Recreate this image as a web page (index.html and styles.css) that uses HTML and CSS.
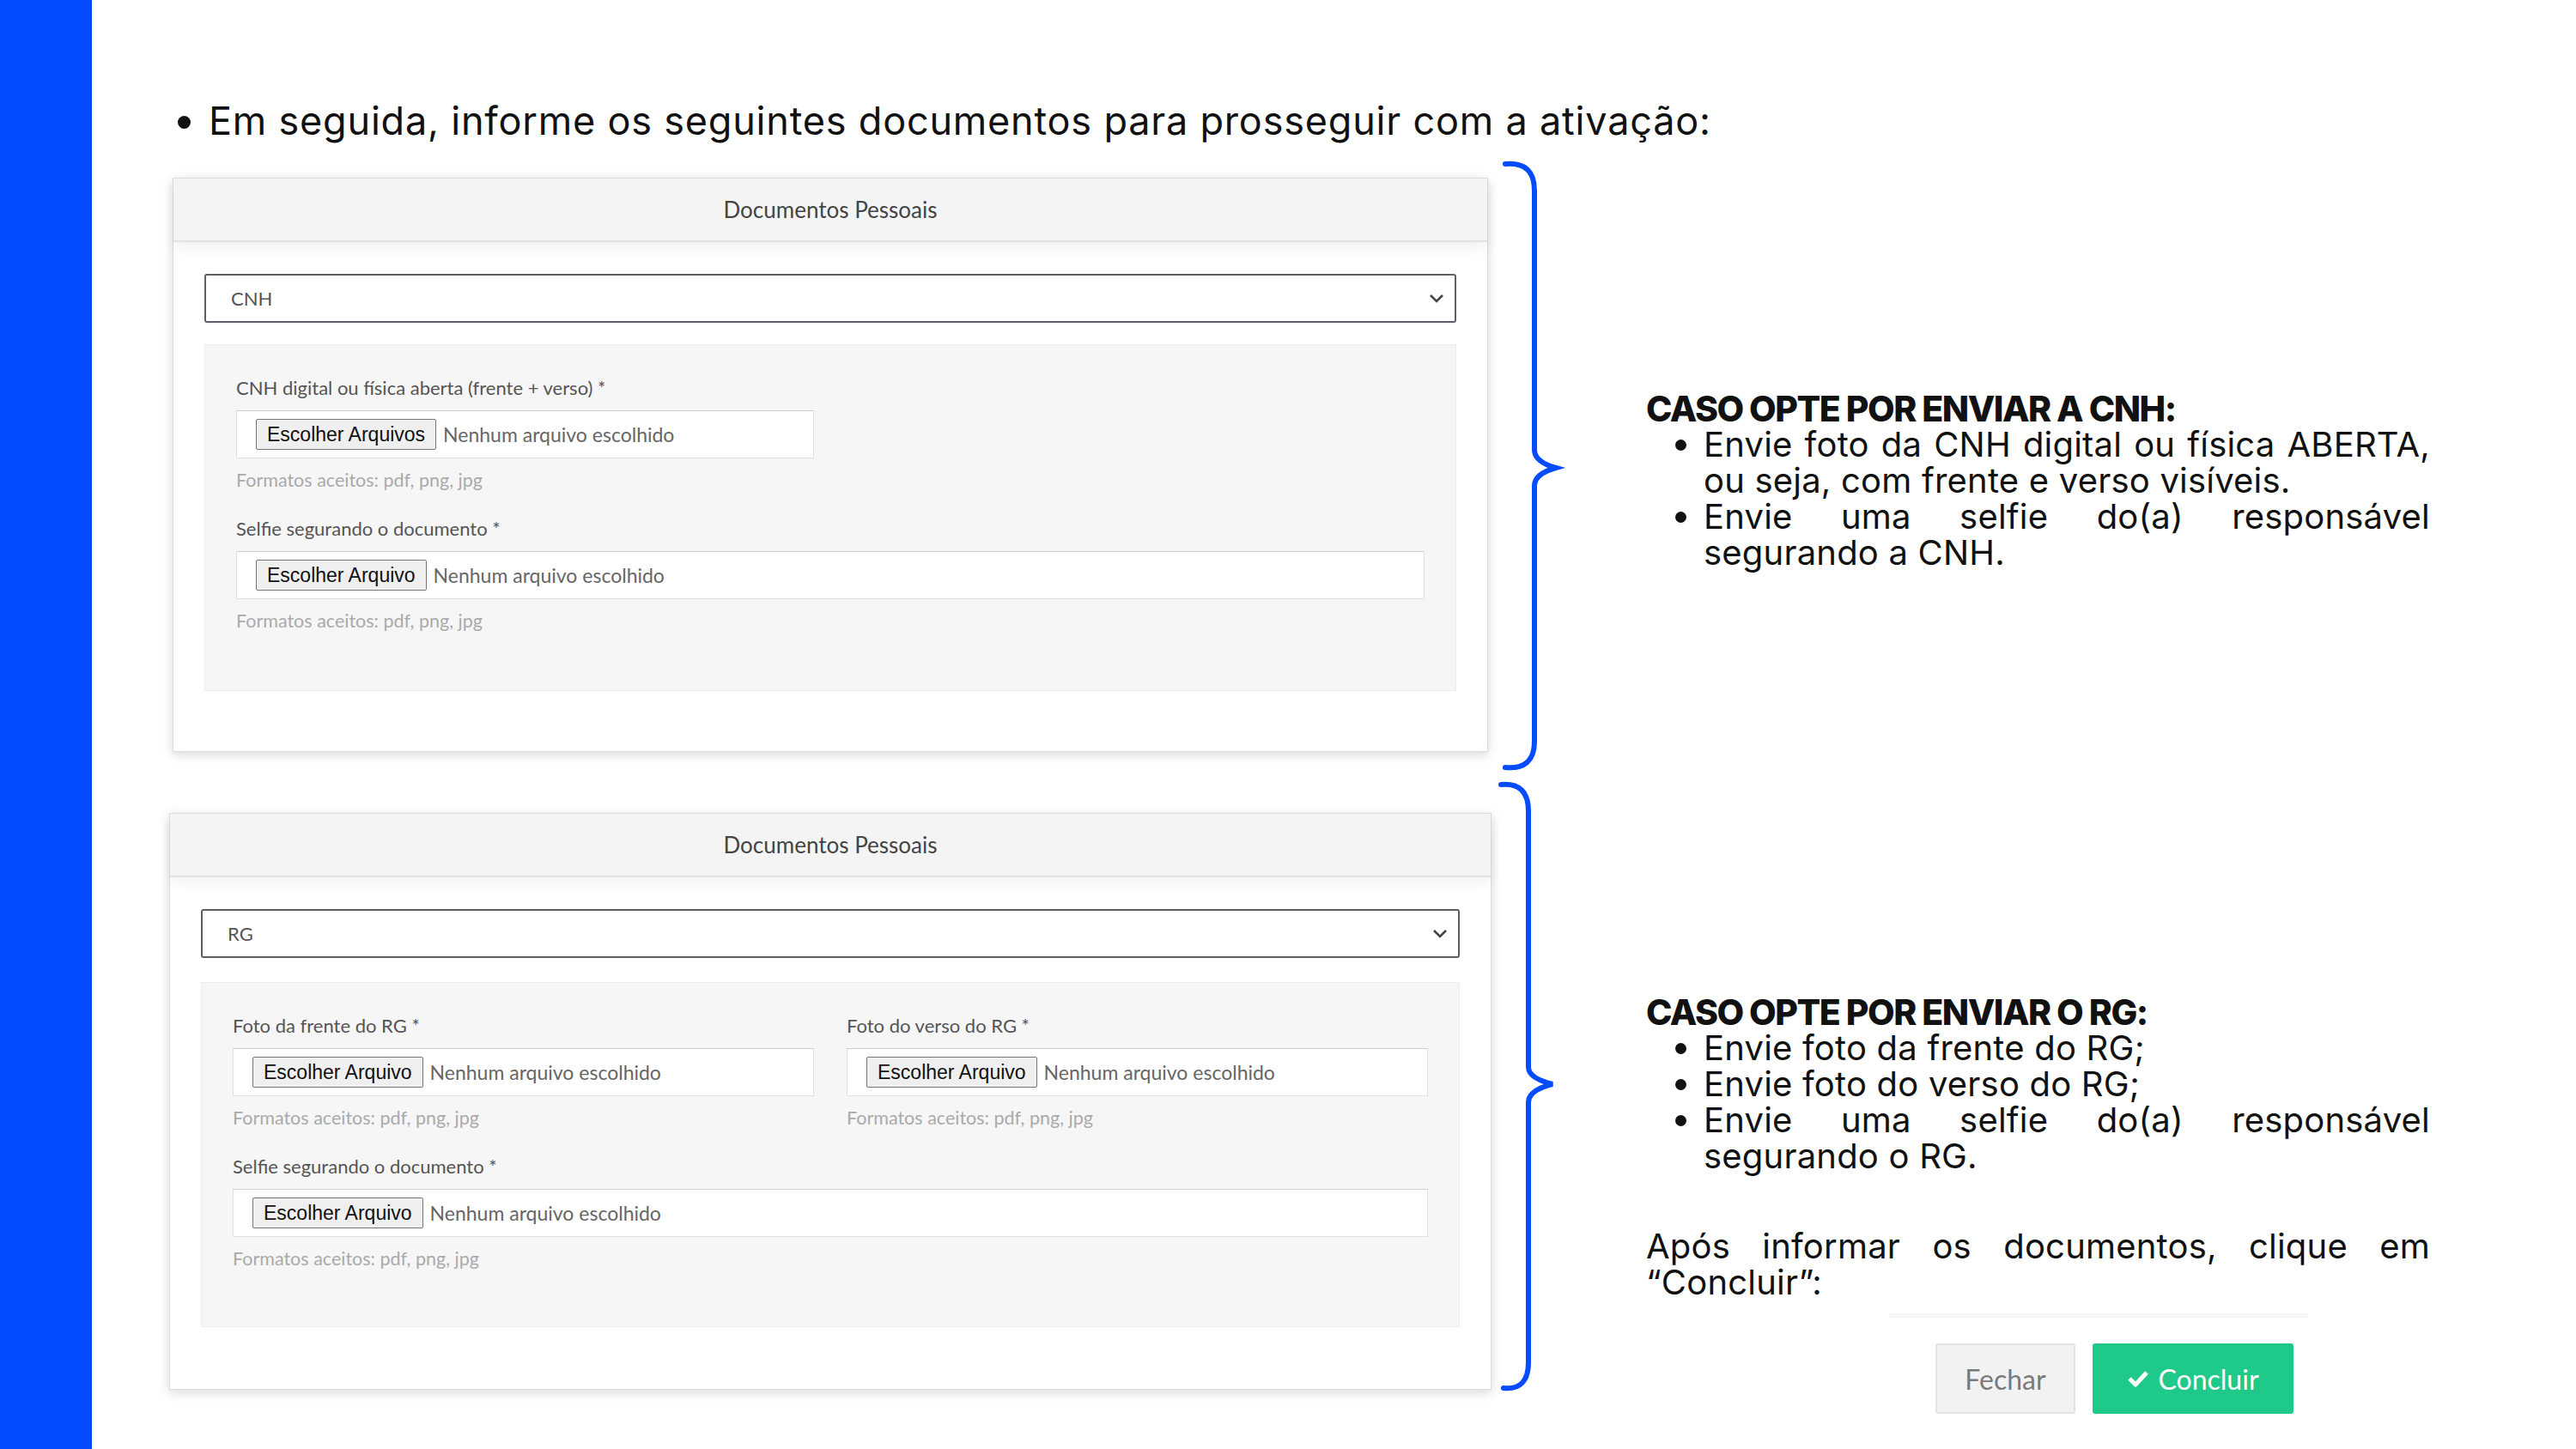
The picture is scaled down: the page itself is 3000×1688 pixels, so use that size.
FILE: index.html
```html
<!DOCTYPE html>
<html lang="pt-BR">
<head>
    <meta charset="UTF-8">
    <title>Ativação - Documentos</title>
    <link rel="stylesheet" href="styles.css">
</head>
<body>
    <div class="slide">
        <aside class="side-bar"></aside>
        <main class="content">
            <ul class="lead">
                <li>Em seguida, informe os seguintes documentos para prosseguir com a ativação:</li>
            </ul>

            <section class="step step-cnh">
                <div class="card card-cnh">
                    <div class="card-head">Documentos Pessoais</div>
                    <div class="card-body">
                        <div class="select">
                            <span>CNH</span>
                            <svg class="chevron" width="18" height="12" viewBox="0 0 18 12"><polyline points="2,2 9,9 16,2" fill="none" stroke="#444" stroke-width="2.6"/></svg>
                        </div>
                        <div class="panel">
                            <div class="fields">
                                <div class="field">
                                    <div class="label">CNH digital ou física aberta (frente + verso) *</div>
                                    <div class="file-box"><span class="file-btn">Escolher Arquivos</span><span class="file-name">Nenhum arquivo escolhido</span></div>
                                    <div class="hint">Formatos aceitos: pdf, png, jpg</div>
                                </div>
                                <div class="field field-wide">
                                    <div class="label">Selfie segurando o documento *</div>
                                    <div class="file-box"><span class="file-btn">Escolher Arquivo</span><span class="file-name">Nenhum arquivo escolhido</span></div>
                                    <div class="hint">Formatos aceitos: pdf, png, jpg</div>
                                </div>
                            </div>
                        </div>
                    </div>
                </div>
                <svg class="brace" width="80" height="713" viewBox="0 0 80 713">
                    <path d="M8 5 Q42 2 42 36 L42 338 Q42 352 67 359 Q42 366 42 380 L42 678 Q42 711 8 708" fill="none" stroke="#054bff" stroke-width="6" stroke-linecap="round"/>
                </svg>
                <div class="notes notes-cnh">
                    <h2>CASO OPTE POR ENVIAR A CNH:</h2>
                    <ul>
                        <li><span class="jline">Envie foto da CNH digital ou física ABERTA,</span> ou seja, com frente e verso visíveis.</li>
                        <li><span class="jline">Envie uma selfie do(a) responsável</span> segurando a CNH.</li>
                    </ul>
                </div>
            </section>

            <section class="step step-rg">
                <div class="card card-rg">
                    <div class="card-head">Documentos Pessoais</div>
                    <div class="card-body">
                        <div class="select">
                            <span>RG</span>
                            <svg class="chevron" width="18" height="12" viewBox="0 0 18 12"><polyline points="2,2 9,9 16,2" fill="none" stroke="#444" stroke-width="2.6"/></svg>
                        </div>
                        <div class="panel">
                            <div class="fields">
                                <div class="field">
                                    <div class="label">Foto da frente do RG *</div>
                                    <div class="file-box"><span class="file-btn">Escolher Arquivo</span><span class="file-name">Nenhum arquivo escolhido</span></div>
                                    <div class="hint">Formatos aceitos: pdf, png, jpg</div>
                                </div>
                                <div class="field">
                                    <div class="label">Foto do verso do RG *</div>
                                    <div class="file-box"><span class="file-btn">Escolher Arquivo</span><span class="file-name">Nenhum arquivo escolhido</span></div>
                                    <div class="hint">Formatos aceitos: pdf, png, jpg</div>
                                </div>
                                <div class="field field-wide">
                                    <div class="label">Selfie segurando o documento *</div>
                                    <div class="file-box"><span class="file-btn">Escolher Arquivo</span><span class="file-name">Nenhum arquivo escolhido</span></div>
                                    <div class="hint">Formatos aceitos: pdf, png, jpg</div>
                                </div>
                            </div>
                        </div>
                    </div>
                </div>
                <svg class="brace" width="80" height="713" viewBox="0 0 80 713">
                    <path d="M3 5 Q35 2 35 36 L35 334 Q35 347 63 354 Q35 361 35 375 L35 678 Q35 711 6 708" fill="none" stroke="#054bff" stroke-width="6" stroke-linecap="round"/>
                </svg>
                <div class="notes notes-rg">
                    <h2>CASO OPTE POR ENVIAR O RG:</h2>
                    <ul>
                        <li>Envie foto da frente do RG;</li>
                        <li>Envie foto do verso do RG;</li>
                        <li><span class="jline">Envie uma selfie do(a) responsável</span> segurando o RG.</li>
                    </ul>
                    <p class="after"><span class="jline">Após informar os documentos, clique em</span> “Concluir”:</p>
                    <div class="action-line"></div>
                    <div class="actions">
                        <span class="btn btn-close">Fechar</span>
                        <span class="btn btn-done">
                            <svg width="26" height="22" viewBox="0 0 26 22"><polyline points="3,11 10,18 23,4" fill="none" stroke="#fff" stroke-width="5" stroke-linejoin="round"/></svg>
                            Concluir
                        </span>
                    </div>
                </div>
            </section>
        </main>
    </div>
</body>
</html>
```

FILE: styles.css
```css
* { box-sizing: border-box; }
html, body { margin: 0; }
body {
    width: 3000px;
    height: 1688px;
    overflow: hidden;
    background: #fff;
    font-family: "Inter", "Liberation Sans", sans-serif;
    color: #111;
}
.slide { display: flex; height: 1688px; }
.side-bar { width: 107px; flex: none; background: #054bff; }
.content { flex: 1; padding-left: 90px; }

.lead {
    margin: 113px 0 0;
    padding-left: 46px;
    font-size: 45px;
    line-height: 56px;
    letter-spacing: 0.8px;
}

.step {
    display: grid;
    grid-template-columns: 1548px 172px 913px;
    height: 713px;
}
.step-cnh { margin-top: 17px; }
.step-rg { margin-top: 10px; }
.brace { display: block; }

/* cards */
.card {
    align-self: start;
    background: #fff;
    border: 1px solid #dcdcdc;
    box-shadow: 0 3px 12px rgba(0, 0, 0, 0.16);
    font-family: "Lato", "Liberation Sans", sans-serif;
}
.card-cnh { margin: 21px 0 0 4px; width: 1532px; height: 669px; }
.card-rg { margin-top: 38px; width: 1540px; height: 672px; }
.card-head {
    height: 74px;
    display: flex;
    align-items: center;
    justify-content: center;
    background: #f4f4f4;
    border-bottom: 2px solid #e2e2e2;
    box-shadow: 0 8px 14px rgba(0, 0, 0, 0.05);
    font-size: 26px;
    color: #444;
}
.card-body { padding: 37px 36px 0; }
.select {
    height: 57px;
    display: flex;
    align-items: center;
    justify-content: space-between;
    padding: 0 12px 0 29px;
    border: 2px solid #5b6066;
    border-radius: 3px;
    font-size: 22px;
    color: #555;
}
.panel {
    margin-top: 25px;
    height: 404px;
    padding: 38px 36px 0;
    background: #f6f6f6;
    border: 1px solid #ececec;
}
.card-rg .panel { margin-top: 28px; height: 402px; }
.fields {
    display: grid;
    grid-template-columns: 1fr 1fr;
    column-gap: 38px;
    row-gap: 33px;
}
.field-wide { grid-column: span 2; }
.label { font-size: 22px; line-height: 24px; color: #555; }
.file-box {
    margin-top: 14px;
    height: 56px;
    display: flex;
    align-items: center;
    gap: 8px;
    padding-left: 22px;
    background: #fff;
    border: 1px solid #e0e0e0;
    border-top-color: #cfcfcf;
}
.file-btn {
    height: 36px;
    display: flex;
    align-items: center;
    padding: 0 12px;
    background: #efefef;
    border: 1px solid #767676;
    border-radius: 2px;
    font: 23px "Liberation Sans", Arial, sans-serif;
    color: #111;
}
.file-name { font-size: 23px; color: #666; }
.hint { margin-top: 13px; font-size: 21.5px; line-height: 24px; color: #aaa; }

/* right-hand notes */
.notes {
    font-size: 40px;
    line-height: 42px;
    text-align: justify;
    letter-spacing: 0.2px;
}
.notes-cnh { margin-top: 269px; }
.notes-rg { margin-top: 249px; }
.notes h2 {
    margin: 0;
    font-size: 41px;
    line-height: 42px;
    font-weight: 800;
    letter-spacing: -1.5px;
    text-align: left;
}
.notes ul { margin: 0; padding-left: 67px; }
.jline { display: block; text-align-last: justify; }
.notes .after { margin: 63px 0 0; }
.action-line { margin: 15px 0 0 283px; width: 488px; height: 5px; background: #f6f6f6; }
.actions { display: flex; gap: 20px; margin: 30px 0 0 337px; }
.btn {
    height: 82px;
    display: flex;
    align-items: center;
    justify-content: center;
    border-radius: 3px;
    font: 32px "Lato", sans-serif;
    letter-spacing: 0;
}
.btn-close { width: 163px; background: #f2f2f2; border: 2px solid #e3e3e3; color: #7a7a7a; }
.btn-done { width: 234px; gap: 10px; background: #1fc98a; color: #fff; }
```
